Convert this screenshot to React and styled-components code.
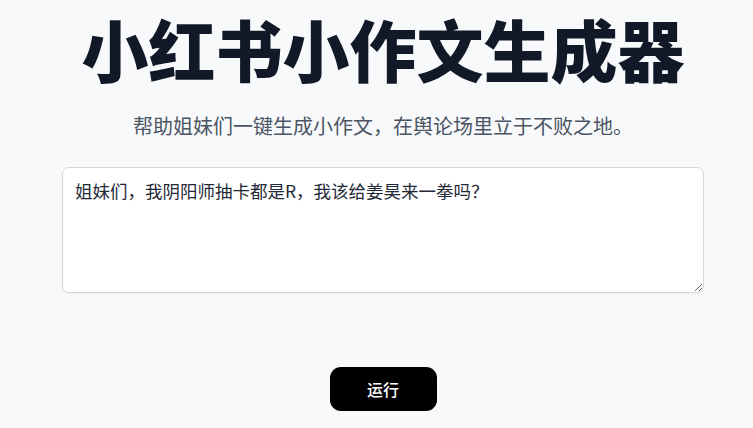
import React, { useState } from "react";
import styled, { createGlobalStyle } from "styled-components";

const GlobalStyle = createGlobalStyle`
  html, body {
    margin: 0;
    padding: 0;
    background: #f8f9fb;
  }
  body {
    font-family: "Noto Sans CJK SC", "Noto Sans", sans-serif;
  }
`;

const App = () => {
  const [text, setText] = useState(
    "姐妹们，我阴阳师抽卡都是R，我该给姜昊来一拳吗？"
  );

  return (
    <Wrapper>
      <GlobalStyle />
      <Title>小红书小作文生成器</Title>
      <Subtitle>帮助姐妹们一键生成小作文，在舆论场里立于不败之地。</Subtitle>
      <Prompt value={text} onChange={(e) => setText(e.target.value)} />
      <RunButton>运行</RunButton>
    </Wrapper>
  );
};

export default App;

const Wrapper = styled.div`
  display: flex;
  flex-direction: column;
  align-items: center;
  width: 100%;
  min-height: 428px;
  padding: 11px 0 0 13px;
  box-sizing: border-box;
`;

const Title = styled.h1`
  margin: 0;
  font-size: 67px;
  line-height: 74px;
  font-weight: 800;
  color: #111827;
  white-space: nowrap;
`;

const Subtitle = styled.p`
  margin: 27px 0 0;
  font-size: 20px;
  line-height: 28px;
  color: #4b5563;
`;

const Prompt = styled.textarea`
  margin-top: 27px;
  width: 642px;
  height: 126px;
  box-sizing: border-box;
  padding: 10px 12px;
  border: 1px solid #d4d7dc;
  border-radius: 7px;
  background: #ffffff;
  font-family: "Noto Sans CJK SC", "Noto Sans", sans-serif;
  font-size: 17.5px;
  line-height: 1.5;
  color: #1f2937;
  outline: none;
  box-shadow: 0 1px 2px rgba(0, 0, 0, 0.04);
`;

const RunButton = styled.button`
  margin-top: 74px;
  width: 107px;
  height: 44px;
  border: none;
  border-radius: 11px;
  background: #000000;
  color: #ffffff;
  font-family: "Noto Sans CJK SC", "Noto Sans", sans-serif;
  font-size: 16px;
  font-weight: 500;
  cursor: pointer;
`;
